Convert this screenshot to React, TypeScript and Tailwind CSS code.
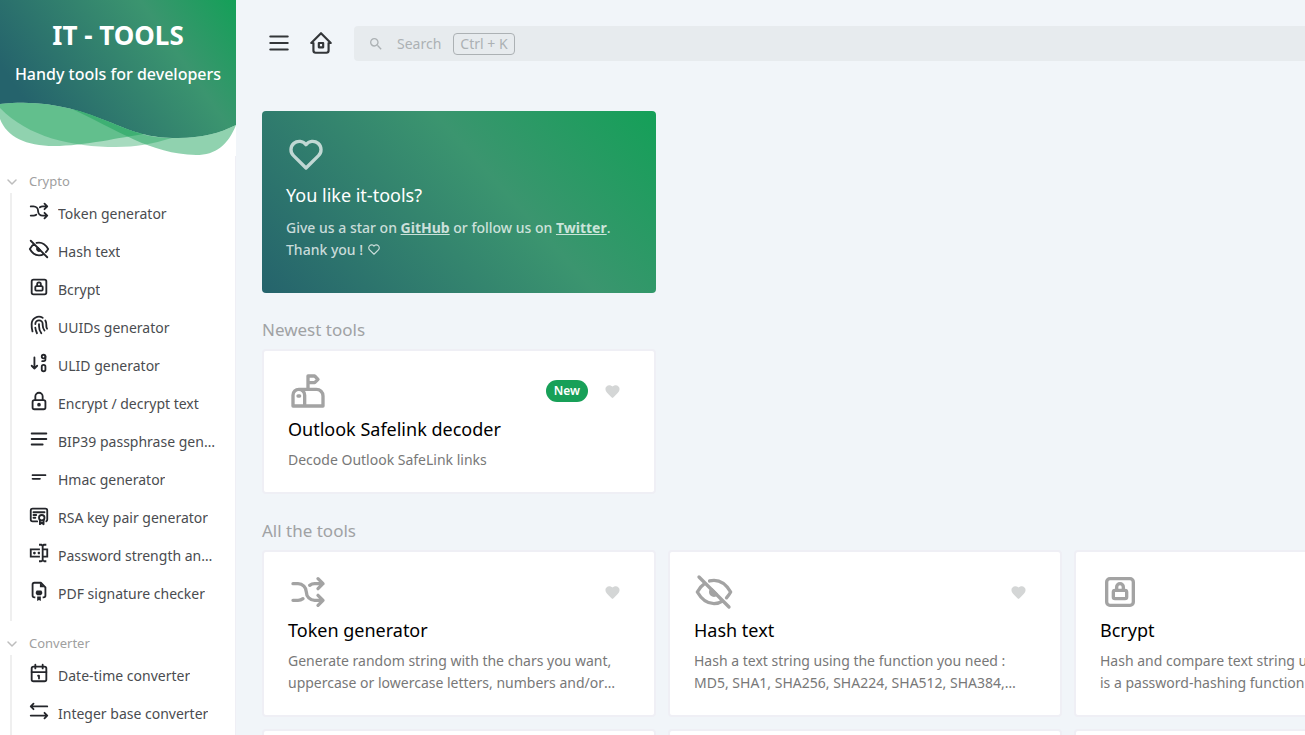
import type { ReactNode } from 'react';

type IconProps = { className?: string };

function Stroke({ className = 'size-[22px]', width = 2, children }: IconProps & { width?: number; children: ReactNode }) {
  return (
    <svg
      viewBox="0 0 24 24"
      fill="none"
      stroke="currentColor"
      strokeWidth={width}
      strokeLinecap="round"
      strokeLinejoin="round"
      aria-hidden="true"
      className={`shrink-0 ${className}`}
    >
      {children}
    </svg>
  );
}

function Solid({ className = 'size-[22px]', d }: IconProps & { d: string }) {
  return (
    <svg viewBox="0 0 24 24" fill="currentColor" aria-hidden="true" className={`shrink-0 ${className}`}>
      <path d={d} />
    </svg>
  );
}

const MenuIcon = (p: IconProps) => (
  <Stroke {...p}>
    <path d="M4 6h16M4 12h16M4 18h16" />
  </Stroke>
);
const HomeIcon = (p: IconProps) => (
  <Stroke {...p}>
    <path d="M5 12H3l9-9l9 9h-2M5 12v7a2 2 0 0 0 2 2h10a2 2 0 0 0 2-2v-7M10 12h4v4h-4z" />
  </Stroke>
);
const SearchIcon = (p: IconProps) => (
  <Solid
    {...p}
    d="M15.5 14h-.79l-.28-.27A6.47 6.47 0 0 0 16 9.5 6.5 6.5 0 1 0 9.5 16c1.61 0 3.09-.59 4.23-1.57l.27.28v.79l5 4.99L20.49 19l-4.99-5zm-6 0C7.01 14 5 11.99 5 9.5S7.01 5 9.5 5 14 7.01 14 9.5 11.99 14 9.5 14z"
  />
);
const ShuffleIcon = (p: IconProps) => (
  <Stroke {...p}>
    <path d="M18 4l3 3l-3 3M18 20l3-3l-3-3M3 7h3a5 5 0 0 1 5 5a5 5 0 0 0 5 5h5M21 7h-5a4.978 4.978 0 0 0-3 1m-4 8a4.984 4.984 0 0 1-3 1H3" />
  </Stroke>
);
const EyeOffIcon = (p: IconProps) => (
  <Stroke {...p}>
    <path d="M10.584 10.587a2 2 0 0 0 2.828 2.83z" fill="currentColor" />
    <path d="M3 3l18 18M9.363 5.365A9.466 9.466 0 0 1 12 5c4 0 7.333 2.333 10 7c-.778 1.361-1.612 2.524-2.503 3.488m-2.14 1.861C15.726 18.449 13.942 19 12 19c-4 0-7.333-2.333-10-7c1.369-2.395 2.913-4.175 4.632-5.341" />
  </Stroke>
);
const LockSquareIcon = (p: IconProps) => (
  <Stroke {...p}>
    <rect x="8" y="11" width="8" height="5" rx="1" />
    <path d="M10 11V9a2 2 0 1 1 4 0v2" />
    <rect x="4" y="4" width="16" height="16" rx="2" />
  </Stroke>
);
const FingerprintIcon = (p: IconProps) => (
  <Stroke {...p}>
    <path d="M18.9 7a8 8 0 0 1 1.1 5v1a6 6 0 0 0 .8 3M8 11a4 4 0 0 1 8 0v1a10 10 0 0 0 2 6M12 11v2a14 14 0 0 0 2.5 8M8 15a18 18 0 0 0 1.8 6M4.9 19a22 22 0 0 1-.9-7v-1a8 8 0 0 1 12-6.95" />
  </Stroke>
);
const SortNumbersIcon = (p: IconProps) => (
  <Stroke {...p}>
    <path d="M4 15l3 3l3-3M7 6v12M17 14a2 2 0 0 1 2 2v3a2 2 0 1 1-4 0v-3a2 2 0 0 1 2-2z" />
    <circle cx="17" cy="5" r="2" />
    <path d="M19 5v3a2 2 0 0 1-2 2h-1.5" />
  </Stroke>
);
const LockIcon = (p: IconProps) => (
  <Stroke {...p}>
    <rect x="5" y="11" width="14" height="10" rx="2" />
    <circle cx="12" cy="16" r="1" />
    <path d="M8 11V7a4 4 0 0 1 8 0v4" />
  </Stroke>
);
const AlignIcon = (p: IconProps) => (
  <Stroke {...p}>
    <path d="M4 6h16M4 12h16M4 18h12" />
  </Stroke>
);
const ShortTextIcon = (p: IconProps) => (
  <Solid
    {...p}
    d="M5 9h14c.55 0 1 .45 1 1s-.45 1-1 1H5c-.55 0-1-.45-1-1s.45-1 1-1zm0 4h8c.55 0 1 .45 1 1s-.45 1-1 1H5c-.55 0-1-.45-1-1s.45-1 1-1z"
  />
);
const CertificateIcon = (p: IconProps) => (
  <Stroke {...p}>
    <circle cx="15" cy="15" r="3" />
    <path d="M13 17.5V22l2-1.5l2 1.5v-4.5M10 19H5a2 2 0 0 1-2-2V7c0-1.1.9-2 2-2h14a2 2 0 0 1 2 2v10a2 2 0 0 1-1 1.73M6 9h12M6 12h3M6 15h2" />
  </Stroke>
);
const PasswordIcon = (p: IconProps) => (
  <Solid
    {...p}
    d="M17 7h5v10h-5v2a1 1 0 0 0 1 1h2v2h-2.5c-.55 0-1.5-.45-1.5-1 0 .55-.95 1-1.5 1H12v-2h2a1 1 0 0 0 1-1V5a1 1 0 0 0-1-1h-2V2h2.5c.55 0 1.5.45 1.5 1 0-.55.95-1 1.5-1H20v2h-2a1 1 0 0 0-1 1v2M2 7h11v2H4v6h9v2H2V7m18 8V9h-3v6h3M8.5 12A1.5 1.5 0 0 0 7 10.5 1.5 1.5 0 0 0 5.5 12 1.5 1.5 0 0 0 7 13.5 1.5 1.5 0 0 0 8.5 12m4.5-1.11c-.61-.56-1.56-.51-2.12.11-.56.6-.51 1.55.12 2.11.55.52 1.43.52 2 0v-2.22z"
  />
);
const SignedFileIcon = (p: IconProps) => (
  <svg viewBox="0 0 24 24" fill="none" aria-hidden="true" className={`shrink-0 ${p.className ?? 'size-[22px]'}`}>
    <path
      d="M8 19H7a2 2 0 0 1-2-2V5a2 2 0 0 1 2-2h7l5 5v9a2 2 0 0 1-2 2h-1"
      stroke="currentColor"
      strokeWidth="2"
      strokeLinejoin="round"
    />
    <path
      d="M13 3v5h5zM9.500 11.500h5l1 1.500v2l-1.500 1.500h-4L8.500 15v-2zM10 18h4v5l-2-1.200-2 1.200z"
      fill="currentColor"
    />
  </svg>
);
const CalendarIcon = (p: IconProps) => (
  <Stroke {...p}>
    <rect x="4" y="5" width="16" height="16" rx="2" />
    <path d="M16 3v4M8 3v4M4 11h16M11 15h1M12 15v3" />
  </Stroke>
);
const LeftRightIcon = (p: IconProps) => (
  <Stroke {...p}>
    <path d="M21 17H3M6 10L3 7l3-3M3 7h18M18 20l3-3l-3-3" />
  </Stroke>
);
const MailboxIcon = (p: IconProps) => (
  <Stroke {...p}>
    <path d="M10 21v-6.500a3.500 3.500 0 0 0-7 0V21h18v-6a4 4 0 0 0-4-4H6.500M12 11V3h4l2 2l-2 2h-4M6 15h1" />
  </Stroke>
);
const HeartIcon = (p: IconProps) => (
  <Stroke {...p}>
    <path d="M19.500 13.572L12 21l-7.500-7.428A5 5 0 1 1 12 7.006a5 5 0 1 1 7.500 6.566" />
  </Stroke>
);
const HeartSolidIcon = (p: IconProps) => (
  <Solid
    {...p}
    d="M12 21.350l-1.450-1.320C5.400 15.360 2 12.270 2 8.500 2 5.410 4.420 3 7.500 3c1.740 0 3.410.81 4.500 2.080C13.090 3.810 14.760 3 16.500 3 19.580 3 22 5.410 22 8.500c0 3.770-3.400 6.860-8.550 11.540L12 21.350z"
  />
);
const ChevronIcon = (p: IconProps) => (
  <Stroke {...p} width={3}>
    <path d="M4 8l8 8l8-8" />
  </Stroke>
);

type Entry = { name: string; Icon: (p: IconProps) => ReactNode };

const groups: { title: string; items: Entry[] }[] = [
  {
    title: 'Crypto',
    items: [
      { name: 'Token generator', Icon: ShuffleIcon },
      { name: 'Hash text', Icon: EyeOffIcon },
      { name: 'Bcrypt', Icon: LockSquareIcon },
      { name: 'UUIDs generator', Icon: FingerprintIcon },
      { name: 'ULID generator', Icon: SortNumbersIcon },
      { name: 'Encrypt / decrypt text', Icon: LockIcon },
      { name: 'BIP39 passphrase generator', Icon: AlignIcon },
      { name: 'Hmac generator', Icon: ShortTextIcon },
      { name: 'RSA key pair generator', Icon: CertificateIcon },
      { name: 'Password strength analyser', Icon: PasswordIcon },
      { name: 'PDF signature checker', Icon: SignedFileIcon },
    ],
  },
  {
    title: 'Converter',
    items: [
      { name: 'Date-time converter', Icon: CalendarIcon },
      { name: 'Integer base converter', Icon: LeftRightIcon },
    ],
  },
];

type Tool = Entry & { text: string; isNew?: boolean };

const newest: Tool[] = [
  { name: 'Outlook Safelink decoder', text: 'Decode Outlook SafeLink links', Icon: MailboxIcon, isNew: true },
];

const tools: Tool[] = [
  {
    name: 'Token generator',
    text: 'Generate random string with the chars you want, uppercase or lowercase letters, numbers and/or symbols.',
    Icon: ShuffleIcon,
  },
  {
    name: 'Hash text',
    text: 'Hash a text string using the function you need : MD5, SHA1, SHA256, SHA224, SHA512, SHA384, SHA3 or RIPEMD160',
    Icon: EyeOffIcon,
  },
  {
    name: 'Bcrypt',
    text: 'Hash and compare text string using bcrypt. Bcrypt is a password-hashing function based on the Blowfish cipher.',
    Icon: LockSquareIcon,
  },
  { name: 'UUIDs generator', text: 'Generate unique identifiers of 128 bits.', Icon: FingerprintIcon },
  { name: 'ULID generator', text: 'Generate random, sortable identifiers.', Icon: SortNumbersIcon },
  { name: 'Encrypt / decrypt text', text: 'Encrypt clear text and decrypt ciphertext.', Icon: LockIcon },
];

function HeroBackdrop() {
  return (
    <svg viewBox="0 0 236 156" preserveAspectRatio="none" aria-hidden="true" className="absolute inset-0 size-full">
      <defs>
        <linearGradient id="hero" gradientUnits="userSpaceOnUse" x1="0" y1="65" x2="189" y2="-67">
          <stop offset="0" stopColor="#25636c" />
          <stop offset="0.66" stopColor="#3b956f" />
          <stop offset="1" stopColor="#14a058" />
        </linearGradient>
      </defs>
      <path
        d="M0 104C45 99 78 109 112 123C134 132 148 138 178 138C202 138 220 133 236 125V0H0z"
        fill="url(#hero)"
      />
      <path
        d="M0 104C45 99 78 109 112 123C122 127 134 132 144 134C122 137 84 146 54 146C26 146 7 137 0 119z"
        fill="#18a058"
        fillOpacity="0.48"
      />
      <path
        d="M0 104C45 99 78 109 112 123C134 132 148 138 172 138C152 144 136 147 116 147C72 147 28 137 0 108z"
        fill="#18a058"
        fillOpacity="0.38"
      />
      <path
        d="M72 109C86 112 100 118 112 123C134 132 148 138 178 138C202 138 220 133 236 125C228 145 216 155 196 155C150 154 118 130 72 109z"
        fill="#18a058"
        fillOpacity="0.48"
      />
    </svg>
  );
}

function Sidebar() {
  return (
    <aside className="flex w-[236px] shrink-0 flex-col overflow-hidden bg-white">
      <a href="#home" className="relative block h-[156px] shrink-0 text-center text-white">
        <HeroBackdrop />
        <div className="relative pt-4">
          <div className="text-[26px] leading-[38px] font-bold">IT - TOOLS</div>
          <div className="mt-2 text-base leading-6 font-medium whitespace-nowrap">Handy tools for developers</div>
        </div>
      </a>
      <nav className="flex flex-1 flex-col gap-3 border-r border-[#efeff5] pt-[15px]">
        {groups.map((group) => (
          <section key={group.title}>
            <button type="button" className="flex h-[22px] w-full items-center pl-[6px] text-[13px] text-[#a0a0a0]">
              <ChevronIcon className="size-3 text-[#bdbdbd]" />
              <span className="ml-[11px]">{group.title}</span>
            </button>
            <ul className="ml-[10px] border-l-2 border-[#efefef] pt-[2px] pb-2">
              {group.items.map(({ name, Icon }) => (
                <li key={name}>
                  <a href="#tool" className="flex h-[38px] items-center pr-[17px] pl-4 text-[#24262b]">
                    <Icon className="mb-[6px] size-[22px]" />
                    <span className="ml-2 truncate text-sm text-[#4a4c50]">{name}</span>
                  </a>
                </li>
              ))}
            </ul>
          </section>
        ))}
      </nav>
    </aside>
  );
}

function ToolCard({ name, text, Icon, isNew }: Tool) {
  return (
    <article className="rounded border-2 border-[#efeff5] bg-white px-6 py-5">
      <div className="flex h-10 items-center">
        <Icon className="size-10 text-[#a3a3a3]" />
        <div className="ml-auto flex items-center gap-[6px]">
          {isNew && (
            <span className="rounded-full bg-[#18a058] px-2 text-xs leading-[22px] font-semibold text-white">New</span>
          )}
          <button type="button" aria-label={`Add ${name} to favorites`} className="flex size-9 items-center justify-center text-[#d4d6d6]">
            <HeartSolidIcon className="size-[17px]" />
          </button>
        </div>
      </div>
      <h3 className="mt-1 text-lg leading-7 text-black">
        <a href="#tool">{name}</a>
      </h3>
      <p className="mt-[6px] mb-px line-clamp-2 text-sm leading-[22px] text-[#787878]">{text}</p>
    </article>
  );
}

export default function App() {
  return (
    <div className="flex h-screen overflow-hidden bg-[#f1f5f9] font-['Noto_Sans','Open_Sans',sans-serif]">
      <Sidebar />
      <main className="min-w-0 flex-1 overflow-hidden pt-[26px] pl-[26px]">
        <div className="min-w-[1206px]">
          <header className="flex h-[35px] items-center text-[#333639]">
            <button type="button" aria-label="Toggle menu" className="mb-[2px] ml-1">
              <MenuIcon className="size-[26px]" />
            </button>
            <a href="#home" aria-label="Home" className="mb-[2px] ml-4">
              <HomeIcon className="size-[26px]" />
            </a>
            <button
              type="button"
              className="ml-5 flex h-[35px] flex-1 items-center rounded bg-[#e7ebee] pl-[14px] text-sm text-[#acb1b4]"
            >
              <SearchIcon className="size-4" />
              <span className="ml-[13px]">Search</span>
              <kbd className="ml-3 rounded border border-[#acb1b4] px-[6px] font-['Noto_Sans','Open_Sans',sans-serif] leading-5">
                Ctrl + K
              </kbd>
            </button>
          </header>

          <div className="mt-[50px] grid grid-cols-3 gap-3">
            <article className="rounded bg-[linear-gradient(48deg,#25636c_0%,#3b956f_60%,#14a058_100%)] px-6 pt-[22px] pb-8 text-white">
              <HeartIcon className="size-10 text-white/70" />
              <h3 className="mt-2 text-lg leading-7">You like it-tools?</h3>
              <p className="mt-2 text-sm leading-[22px] font-medium text-white/75">
                Give us a star on{' '}
                <a href="#github" className="font-bold underline">
                  GitHub
                </a>{' '}
                or follow us on{' '}
                <a href="#twitter" className="font-bold underline">
                  Twitter
                </a>
                .<br />
                Thank you ! <HeartIcon className="inline size-[14px] align-[-1px]" />
              </p>
            </article>
          </div>

          <h2 className="mt-[25px] mb-[7px] text-[17px] leading-6 text-[#a0a2a4]">Newest tools</h2>
          <div className="grid grid-cols-3 gap-3">
            {newest.map((tool) => (
              <ToolCard key={tool.name} {...tool} />
            ))}
          </div>

          <h2 className="mt-[25px] mb-[7px] text-[17px] leading-6 text-[#a0a2a4]">All the tools</h2>
          <div className="grid grid-cols-3 gap-3">
            {tools.map((tool) => (
              <ToolCard key={tool.name} {...tool} />
            ))}
          </div>
        </div>
      </main>
    </div>
  );
}
